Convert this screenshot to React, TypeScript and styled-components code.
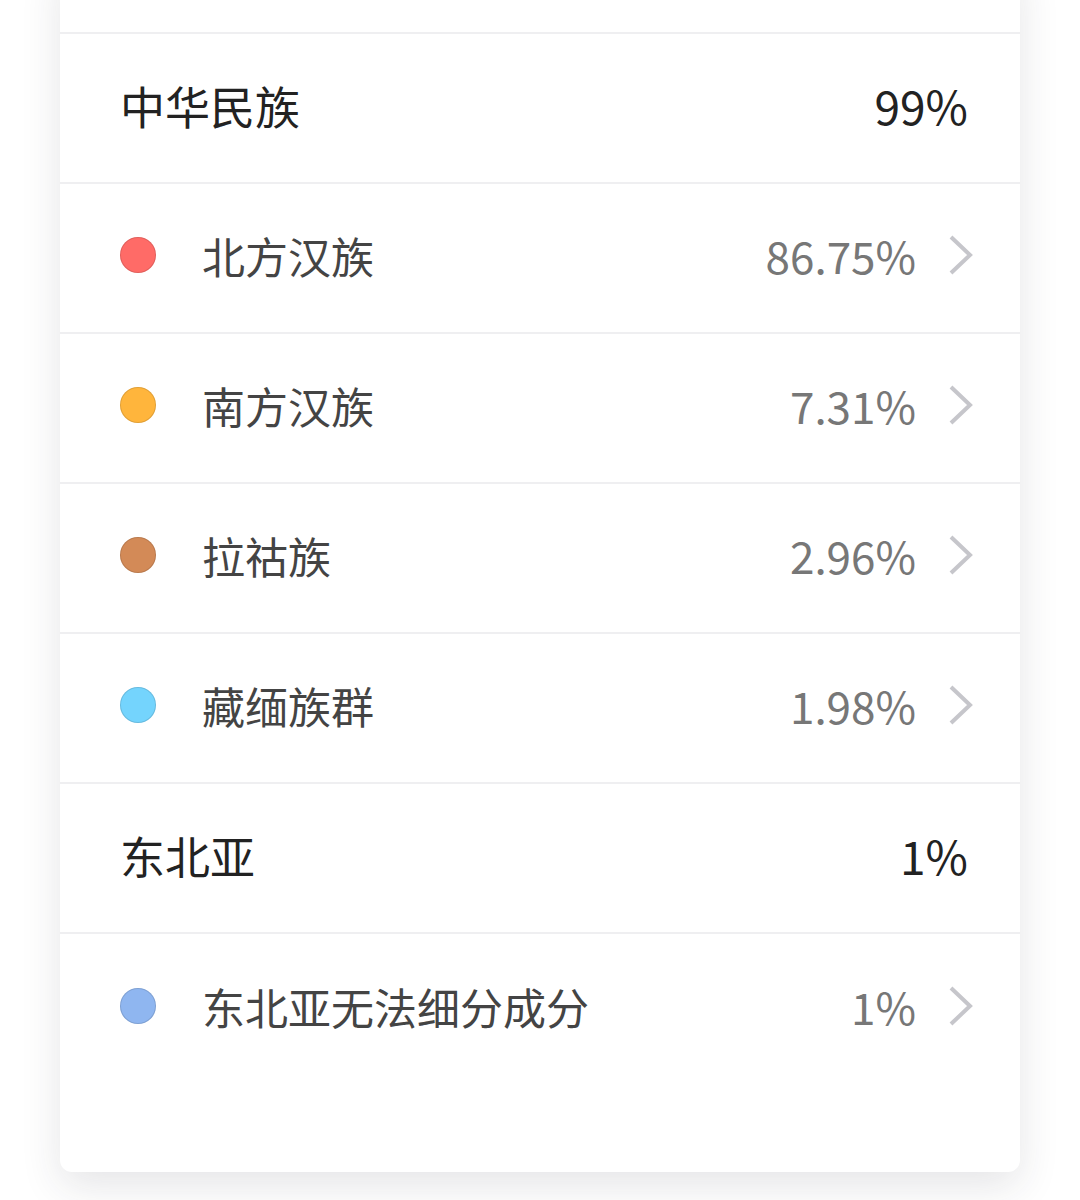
import React from "react";
import styled, { createGlobalStyle } from "styled-components";

const GlobalStyle = createGlobalStyle`
  html, body {
    margin: 0;
    padding: 0;
    background: #ffffff;
  }
  body {
    font-family: "Noto Sans CJK SC", "Noto Sans", sans-serif;
    overflow: hidden;
  }
`;

const Page = styled.div`
  padding: 0 60px 60px;
`;

const Card = styled.div`
  margin-top: -40px;
  background: #ffffff;
  border-radius: 12px;
  box-shadow: 0 14px 40px rgba(40, 40, 60, 0.12);
  padding-bottom: 88px;
`;

const TopStrip = styled.div`
  height: 74px;
  border-bottom: 2px solid #efeff1;
  box-sizing: border-box;
`;

const Row = styled.div<{ last?: boolean }>`
  display: flex;
  align-items: center;
  height: 150px;
  box-sizing: border-box;
  padding: 0 46px 6px 60px;
  border-bottom: ${(p) => (p.last ? "none" : "2px solid #efeff1")};
`;

const GroupLabel = styled.div`
  flex: 1;
  font-size: 45px;
  color: #222222;
`;

const GroupValue = styled.div`
  font-size: 46px;
  color: #222222;
  padding-right: 6px;
`;

const Dot = styled.span<{ color: string }>`
  width: 36px;
  height: 36px;
  border-radius: 50%;
  background: ${(p) => p.color};
  box-shadow: inset 0 0 0 1px rgba(0, 0, 0, 0.12);
  flex-shrink: 0;
`;

const ItemLabel = styled.div`
  flex: 1;
  font-size: 43px;
  color: #444444;
  margin-left: 46px;
`;

const ItemValue = styled.div`
  font-size: 44px;
  color: #777777;
`;

const Chevron = styled.svg`
  width: 26px;
  height: 40px;
  margin-left: 32px;
  flex-shrink: 0;
`;

interface Item {
  name: string;
  value: string;
  color: string;
}

interface Group {
  name: string;
  value: string;
  items: Item[];
}

const groups: Group[] = [
  {
    name: "中华民族",
    value: "99%",
    items: [
      { name: "北方汉族", value: "86.75%", color: "#ff6b67" },
      { name: "南方汉族", value: "7.31%", color: "#ffb53c" },
      { name: "拉祜族", value: "2.96%", color: "#d38a57" },
      { name: "藏缅族群", value: "1.98%", color: "#74d4fd" },
    ],
  },
  {
    name: "东北亚",
    value: "1%",
    items: [{ name: "东北亚无法细分成分", value: "1%", color: "#8fb6f0" }],
  },
];

const ArrowIcon = () => (
  <Chevron viewBox="0 0 26 40">
    <polyline points="3,2 22,20 3,38" fill="none" stroke="#c6c6cb" strokeWidth="4" />
  </Chevron>
);

export default function App() {
  return (
    <Page>
      <GlobalStyle />
      <Card>
        <TopStrip />
        {groups.map((g, gi) => (
          <React.Fragment key={g.name}>
            <Row>
              <GroupLabel>{g.name}</GroupLabel>
              <GroupValue>{g.value}</GroupValue>
            </Row>
            {g.items.map((it, ii) => (
              <Row key={it.name} last={gi === groups.length - 1 && ii === g.items.length - 1}>
                <Dot color={it.color} />
                <ItemLabel>{it.name}</ItemLabel>
                <ItemValue>{it.value}</ItemValue>
                <ArrowIcon />
              </Row>
            ))}
          </React.Fragment>
        ))}
      </Card>
    </Page>
  );
}
